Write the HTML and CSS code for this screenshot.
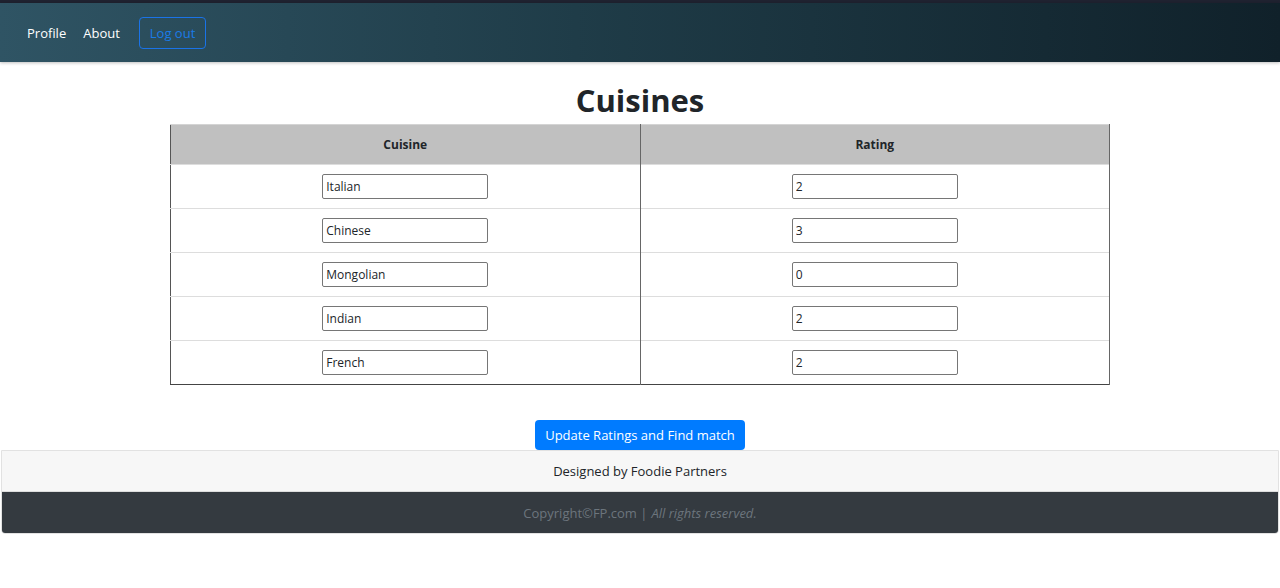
FILE: index.html
```html
<!DOCTYPE html>
<html lang="en">
<head>
<meta charset="utf-8">
<title>Cuisines</title>
<link rel="stylesheet" href="styles.css">
</head>
<body>
<div class="topstrip"></div>
<nav class="navbar">
  <a class="nav-link" href="#">Profile</a>
  <a class="nav-link" href="#">About</a>
  <button class="btn-logout" type="button">Log out</button>
</nav>
<main class="content">
  <h1 class="title">Cuisines</h1>
  <table class="cuisine-table">
    <thead>
      <tr><th>Cuisine</th><th>Rating</th></tr>
    </thead>
    <tbody>
      <tr><td><input class="field" type="text" value="Italian"></td><td><input class="field" type="text" value="2"></td></tr>
      <tr><td><input class="field" type="text" value="Chinese"></td><td><input class="field" type="text" value="3"></td></tr>
      <tr><td><input class="field" type="text" value="Mongolian"></td><td><input class="field" type="text" value="0"></td></tr>
      <tr><td><input class="field" type="text" value="Indian"></td><td><input class="field" type="text" value="2"></td></tr>
      <tr><td><input class="field" type="text" value="French"></td><td><input class="field" type="text" value="2"></td></tr>
    </tbody>
  </table>
  <div class="actions">
    <button class="btn-primary" type="button">Update Ratings and Find match</button>
  </div>
</main>
<footer class="footer">
  <div class="footer-top">Designed by Foodie Partners</div>
  <div class="footer-bottom">Copyright©FP.com | <em>All rights reserved.</em></div>
</footer>
</body>
</html>
```

FILE: styles.css
```css
* { box-sizing: border-box; }
html, body { margin: 0; padding: 0; }
body {
  font-family: "Open Sans", "Noto Sans", "Liberation Sans", sans-serif;
  color: #212529;
  background: #fff;
  font-size: 13px;
}
.topstrip { height: 3px; background: #1f2230; }
.navbar {
  height: 59px;
  display: flex;
  align-items: center;
  padding-left: 27px;
  background: linear-gradient(90deg, #2f5464 0%, #1f3c48 45%, #10212a 100%);
  box-shadow: 0 1px 3px rgba(0,0,0,0.25);
}
.nav-link {
  color: #fff;
  text-decoration: none;
  font-size: 13px;
  margin-right: 17px;
}
.btn-logout {
  margin-left: 2px;
  height: 32px;
  padding: 0 10px;
  border: 1px solid #1a73e8;
  border-radius: 4px;
  background: transparent;
  color: #1a7be8;
  font-family: inherit;
  font-size: 13px;
}
.content { display: flex; flex-direction: column; align-items: center; }
.title {
  margin: 18px 0 4px;
  font-size: 31px;
  line-height: 40px;
  font-weight: 700;
  color: #212529;
}
.cuisine-table {
  width: 940px;
  border-collapse: collapse;
  border-left: 1px solid #555;
  border-right: 1px solid #555;
  border-bottom: 1px solid #444;
}
.cuisine-table th {
  height: 40px;
  background: #c0c0c0;
  font-size: 12px;
  font-weight: 700;
  border-top: 1px solid #d4d4d4;
  border-right: 1px solid #666;
  padding: 0;
}
.cuisine-table td {
  height: 44px;
  border-top: 1px solid #ddd;
  border-right: 1px solid #666;
  text-align: center;
  padding: 0;
}
.field {
  width: 166px;
  height: 25px;
  border: 1px solid #767676;
  border-radius: 2px;
  padding: 0 3px;
  font-family: inherit;
  font-size: 12px;
  color: #212529;
  vertical-align: middle;
}
.actions { margin-top: 35px; }
.btn-primary {
  width: 210px;
  height: 30px;
  border: none;
  border-radius: 4px;
  background: #007bff;
  color: #fff;
  font-family: inherit;
  font-size: 13px;
  padding: 0;
}
.footer {
  margin: 0 1px;
  border: 1px solid #e2e2e2;
  border-radius: 0 0 4px 4px;
  overflow: hidden;
}
.footer-top {
  height: 41px;
  background: #f7f7f7;
  border-bottom: 1px solid #ddd;
  display: flex;
  align-items: center;
  justify-content: center;
  font-size: 13px;
  color: #212529;
}
.footer-bottom {
  height: 41px;
  background: #343a40;
  display: flex;
  align-items: center;
  justify-content: center;
  font-size: 13px;
  color: #6c757d;
}
.footer-bottom em { margin-left: 4px; }
```
